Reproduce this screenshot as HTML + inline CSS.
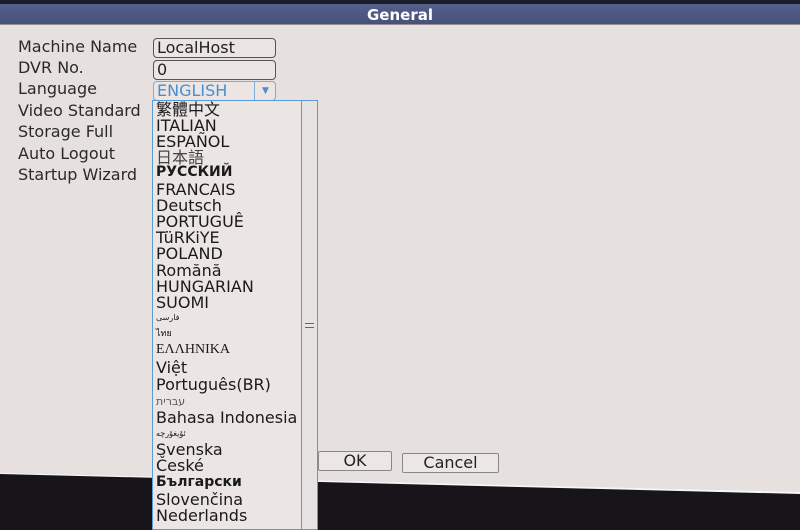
<!DOCTYPE html>
<html><head><meta charset="utf-8"><style>
body{margin:0;width:800px;height:530px;overflow:hidden;background:#e6e1df;font-family:"DejaVu Sans","Liberation Sans","Noto Sans CJK SC",sans-serif;position:relative}
.top{position:absolute;left:0;top:0;width:800px;height:4px;background:#1b1d2a}
.bar{position:absolute;left:0;top:4px;width:800px;height:20px;background:linear-gradient(#54618a,#46517a);color:#fff;font-weight:bold;font-size:15px;text-align:center;line-height:22px;border-bottom:1px solid #9a8a90}
.bot{position:absolute;left:0;top:0;width:800px;height:530px;background:#17141a;clip-path:polygon(0 474px,800px 494px,800px 530px,0 530px)}
.line{position:absolute;left:0;top:0;width:800px;height:530px;background:#f6f6fa;clip-path:polygon(0 473px,800px 492px,800px 494px,0 475px)}
.lbl{position:absolute;left:18px;font-size:16px;line-height:18px;color:#2a2a2a}
.inp{position:absolute;left:153px;width:118px;height:18px;border:1px solid #555;border-radius:4px;background:#ebe5e3;font-size:16px;line-height:18px;padding-left:3px;color:#222}
.btn{position:absolute;height:18px;border:1px solid #888;border-radius:2px;background:#ebe7e6;font-size:16px;text-align:center;line-height:18px;color:#222}
.list{position:absolute;left:152px;top:100px;width:164px;height:428px;border:1px solid #5a9ad8;background:#ebe6e4;overflow:hidden}
.sb{position:absolute;right:0;top:0;width:15px;height:100%;border-left:1px solid #5a9ad8;background:#e7e3e2}
.it{position:absolute;left:3px;font-size:16px;line-height:17px;color:#1a1a1a;white-space:nowrap}
</style></head><body>
<div class="top"></div><div class="bar">General</div>
<div class="lbl" style="top:38px">Machine Name</div>
<div class="lbl" style="top:59px">DVR No.</div>
<div class="lbl" style="top:80px">Language</div>
<div class="lbl" style="top:102px">Video Standard</div>
<div class="lbl" style="top:123px">Storage Full</div>
<div class="lbl" style="top:145px">Auto Logout</div>
<div class="lbl" style="top:166px">Startup Wizard</div>
<div class="inp" style="top:38px">LocalHost</div>
<div class="inp" style="top:60px">0</div>
<div class="inp" style="top:81px;border-color:#7aaede;color:#4a8ed0">ENGLISH<span style="position:absolute;left:100px;top:0;width:21px;height:18px;border-left:1px solid #7aaede;text-align:center;font-size:9px">▼</span></div>
<div class="btn" style="left:318px;top:451px;width:72px">OK</div>
<div class="btn" style="left:402px;top:453px;width:95px">Cancel</div>
<div class="line"></div><div class="bot"></div>
<div class="list"><div class="sb"><div style="position:absolute;left:3px;top:222px;width:9px;height:3px;border-top:1px solid #666;border-bottom:1px solid #666"></div></div>
<div class="it" style="top:0">繁體中文</div>
<div class="it" style="top:16px">ITALIAN</div>
<div class="it" style="top:32px">ESPAÑOL</div>
<div class="it" style="top:48px;color:#444">日本語</div>
<div class="it" style="top:63px;font-size:14px;font-weight:bold">РУССКИЙ</div>
<div class="it" style="top:80px">FRANCAIS</div>
<div class="it" style="top:96px">Deutsch</div>
<div class="it" style="top:112px">PORTUGUÊ</div>
<div class="it" style="top:128px">TüRKiYE</div>
<div class="it" style="top:144px">POLAND</div>
<div class="it" style="top:161px">Romănă</div>
<div class="it" style="top:177px">HUNGARIAN</div>
<div class="it" style="top:193px">SUOMI</div>
<div class="it" style="top:208px;font-size:8px">فارسی</div>
<div class="it" style="top:225px;font-size:9px">ไทย</div>
<div class="it" style="top:240px;font-family:'Liberation Serif',serif;font-size:14px">ΕΛΛΗΝΙΚΑ</div>
<div class="it" style="top:258px">Việt</div>
<div class="it" style="top:275px">Português(BR)</div>
<div class="it" style="top:292px;font-size:11px;color:#555">עברית</div>
<div class="it" style="top:308px">Bahasa Indonesia</div>
<div class="it" style="top:324px;font-size:8px">ئۇيغۇرچە</div>
<div class="it" style="top:340px">Svenska</div>
<div class="it" style="top:356px">České</div>
<div class="it" style="top:373px;font-size:14px;font-weight:bold">Български</div>
<div class="it" style="top:390px">Slovenčina</div>
<div class="it" style="top:406px">Nederlands</div>
</div>
</body></html>
